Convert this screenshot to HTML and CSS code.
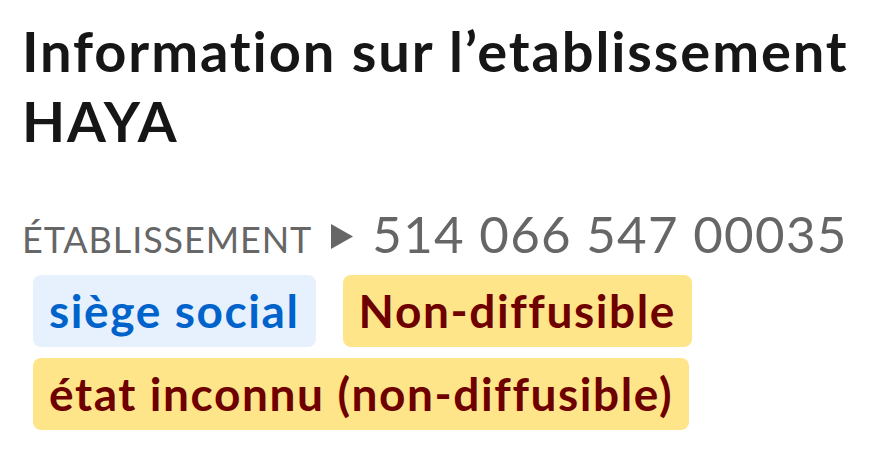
FILE: index.html
```html
<!DOCTYPE html>
<html lang="fr">
<head>
    <meta charset="UTF-8">
    <meta name="viewport" content="width=device-width, initial-scale=1.0">
    <title>Information sur l’etablissement HAYA</title>
    <link rel="stylesheet" href="styles.css">
</head>
<body>
    <div class="container">
        <h1>Information sur l’etablissement HAYA</h1>

        <div class="siret-line">
            <span class="label">établissement</span>
            <svg class="arrow" width="22" height="25" viewBox="0 0 22 25">
                <path d="M0 0 L22 12.5 L0 25 Z" fill="#666"/>
            </svg>
            <span class="siret">514 066 547 00035</span>
        </div>

        <div class="badges">
            <span class="badge info">siège social</span>
            <span class="badge warning">Non-diffusible</span>
            <span class="badge warning">état inconnu (non-diffusible)</span>
        </div>
    </div>
</body>
</html>
```

FILE: styles.css
```css
body {
    font-family: 'Lato', 'Noto Sans', sans-serif;
    font-variant-ligatures: none;
    margin: 0;
    color: #161616;
    background: #fff;
}
.container {
    padding: 0 22px;
}
h1 {
    font-size: 56px;
    line-height: 70px;
    font-weight: 700;
    letter-spacing: 1.9px;
    margin: 16px 0 0;
}
.siret-line {
    display: flex;
    align-items: baseline;
    margin-top: 48px;
    line-height: 60px;
    color: #666;
}
.label {
    font-size: 36px;
    letter-spacing: 0.9px;
    text-transform: uppercase;
}
.arrow {
    margin: 0 19px 0 19px;
    align-self: center;
}
.siret {
    font-size: 51px;
    letter-spacing: 1.3px;
}
.badges {
    display: flex;
    flex-wrap: wrap;
    gap: 11px 27px;
    margin: 6px 0 0 11px;
}
.badge {
    font-size: 46px;
    font-weight: 700;
    line-height: 56px;
    letter-spacing: 1.6px;
    padding: 8px 16px;
    border-radius: 8px;
}
.info {
    background: #e6f1fd;
    color: #0063cb;
}
.warning {
    background: #fee58a;
    color: #6e0000;
}
```
